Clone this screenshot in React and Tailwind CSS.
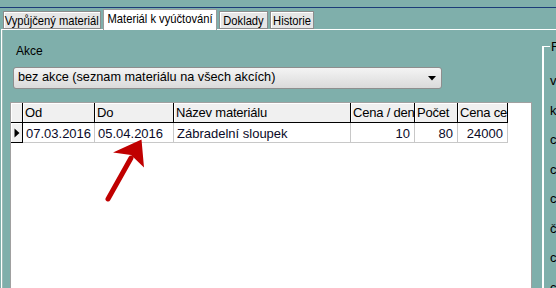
export default function App() {
  const cols = [
    { w: "w-[72px]", h: "Od", d: "07.03.2016", r: false },
    { w: "w-[79px]", h: "Do", d: "05.04.2016", r: false },
    { w: "w-[177px]", h: "Název materiálu", d: "Zábradelní sloupek", r: false },
    { w: "w-[64px]", h: "Cena / den", d: "10", r: true },
    { w: "w-[43px]", h: "Počet", d: "80", r: true },
    { w: "w-[50px]", h: "Cena ce", d: "24000", r: true },
  ];
  const side = ["v", "k", "c", "c", "c", "č", "c", "c"];
  const tabTxt = "inline-block whitespace-nowrap scale-x-[0.86]";
  return (
    <div className="relative w-[556px] h-[288px] overflow-hidden bg-[#7fafab] flex flex-col font-['Liberation_Sans',Arial,sans-serif] text-black">
      <div className="h-[7px] shrink-0" />
      <div className="h-px bg-[#1b3c78] shrink-0" />
      <div className="h-px shrink-0" />
      {/* tabs */}
      <div className="h-[20px] shrink-0 flex items-end pl-[3px] leading-none text-[13px]">
        <div className="w-[98px] h-[18px] bg-[#e6e6e6] border border-[#8c8c8c] shadow-[inset_1px_1px_0_#fff] flex items-center justify-center overflow-hidden"><span className={tabTxt}>Vypůjčený materiál</span></div>
        <div className="ml-[2px] w-[114px] h-[21px] -mb-px bg-white border-t border-l border-r border-[#9a9a9a] flex items-center justify-center pb-[3px] relative z-10 overflow-hidden"><span className={tabTxt}>Materiál k vyúčtování</span></div>
        <div className="ml-[2px] w-[49px] h-[18px] bg-[#e6e6e6] border border-[#8c8c8c] shadow-[inset_1px_1px_0_#fff] flex items-center justify-center overflow-hidden"><span className={tabTxt}>Doklady</span></div>
        <div className="ml-[2px] w-[44px] h-[18px] bg-[#e6e6e6] border border-[#8c8c8c] shadow-[inset_1px_1px_0_#fff] flex items-center justify-center overflow-hidden"><span className={tabTxt}>Historie</span></div>
      </div>
      {/* panel */}
      <div className="flex-1 flex border-t border-white ml-px border-l border-l-white min-h-0">
        <div className="w-[530px] shrink-0 flex flex-col border-l border-[#9fb9b6]">
          <div className="ml-[13px] mt-[14px] h-[14px] text-[12px] leading-[14px]">Akce</div>
          <div className="ml-[10px] mt-[9px] w-[429px] h-[22px] rounded-[3px] border border-[#8e8e8e] bg-gradient-to-b from-[#f4f4f4] to-[#dadada] flex items-center justify-between pl-[4px] pr-[5px] text-[12.7px]">
            <span className="whitespace-nowrap">bez akce (seznam materiálu na všech akcích)</span>
            <svg width="8" height="5" viewBox="0 0 8 5"><path d="M0 0H8L4 4.5Z" fill="#000" /></svg>
          </div>
          <div className="ml-[7px] mt-[13px] flex-1 bg-white border-t border-l border-r border-[#a0a0a0] text-[13px] leading-none">
            <div className="flex h-[20px]">
              <div className="w-[12px] h-full bg-[#f0f0f0] border-r border-b border-black shadow-[inset_1px_1px_0_#fff]" />
              {cols.map((c, i) => (
                <div key={i} className={`${c.w} h-full bg-[#f0f0f0] border-r border-b border-black shadow-[inset_1px_1px_0_#fff] flex items-center pl-[2px] whitespace-nowrap tracking-[-0.2px]`}>{c.h}</div>
              ))}
            </div>
            <div className="flex h-[20px]">
              <div className="w-[12px] h-full bg-[#f0f0f0] border-r border-b border-black shadow-[inset_1px_1px_0_#fff] flex items-center justify-center">
                <svg width="6" height="10" viewBox="0 0 6 10"><path d="M0.5 0.5L5.5 5L0.5 9.5Z" fill="#000" /></svg>
              </div>
              {cols.map((c, i) => (
                <div key={i} className={`${c.w} h-full border-r border-b border-[#c8c8c8] flex items-center pt-[1px] whitespace-nowrap text-[#0a0a28] ${c.r ? "justify-end pr-[4px]" : "pl-[3px]"}`}>{c.d}</div>
              ))}
            </div>
          </div>
        </div>
        <div className="flex-1 pl-[10px] flex flex-col">
          <div className="mt-[16px] flex-1 border-l-2 border-white flex flex-col text-[13px] leading-none">
            <div className="-mt-[7px] h-[14px] flex items-center">
              <div className="w-[6px] h-px bg-white" />
              <span className="ml-[1px] whitespace-nowrap">F</span>
            </div>
            <div className="flex flex-col pl-[6px] pt-[21px] gap-[16.5px] whitespace-nowrap">
              {side.map((s, i) => (
                <div key={i} className="h-[13px] leading-[13px]">{s}</div>
              ))}
            </div>
          </div>
        </div>
      </div>
      <svg className="absolute left-0 top-0 pointer-events-none" width="556" height="288" viewBox="0 0 556 288">
        <path d="M108 199L131 158" stroke="#c00000" strokeWidth="5" strokeLinecap="round" />
        <path d="M141.5 139.5L113 152.5L131 155L144 167.5Z" fill="#c00000" />
      </svg>
    </div>
  );
}
